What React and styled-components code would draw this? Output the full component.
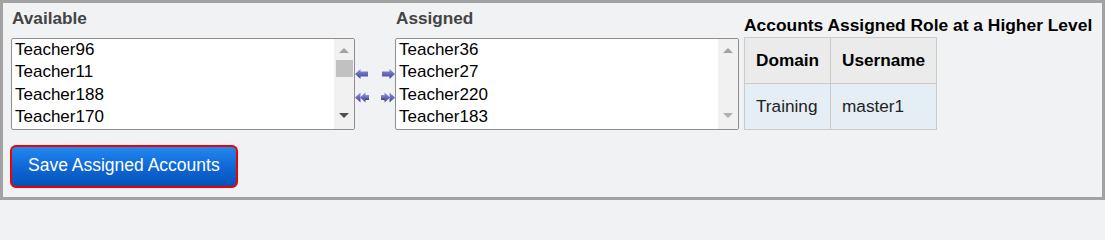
import React from "react";
import styled, { createGlobalStyle } from "styled-components";

const GlobalStyle = createGlobalStyle`
  html, body { margin: 0; padding: 0; background: #f1f2f4; }
  body { font-family: "Liberation Sans", Arial, sans-serif; }
  * { box-sizing: border-box; }
`;

const Panel = styled.div`
  width: 1105px;
  height: 200px;
  border: 3px solid #a2a2a2;
  background: #f1f2f4;
  padding: 5px 8px 0 8px;
  display: flex;
  flex-direction: column;
  align-items: flex-start;
`;

const TopRow = styled.div`
  display: flex;
  align-items: flex-start;
`;

const ListColumn = styled.div`
  display: flex;
  flex-direction: column;
  width: 344px;
`;

const Label = styled.div`
  font-size: 17.2px;
  font-weight: bold;
  line-height: 20px;
  color: #444;
  margin-bottom: 10px;
  padding-left: 1px;
`;

const ListBox = styled.div`
  height: 92px;
  border: 1px solid #8e8e8e;
  border-radius: 2px;
  background: #fff;
  display: flex;
  overflow: hidden;
`;

const Items = styled.div`
  flex: 1;
  padding: 0 0 0 3px;
  overflow: hidden;
`;

const Item = styled.div`
  font-size: 17px;
  line-height: 22.3px;
  color: #000;
  white-space: nowrap;
`;

const Scrollbar = styled.div`
  width: 20px;
  background: #f1f1f1;
  display: flex;
  flex-direction: column;
  align-items: center;
  padding: 9px 0 11px;
`;

const UpArrow = styled.div`
  width: 0;
  height: 0;
  border-left: 5px solid transparent;
  border-right: 5px solid transparent;
  border-bottom: 5px solid ${(p) => (p.$active ? "#505050" : "#a3a3a3")};
`;

const DownArrow = styled.div`
  margin-top: auto;
  width: 0;
  height: 0;
  border-left: 5px solid transparent;
  border-right: 5px solid transparent;
  border-top: 5px solid ${(p) => (p.$active ? "#505050" : "#b0b0b0")};
`;

const Thumb = styled.div`
  margin-top: 7px;
  width: 17px;
  height: 17px;
  background: #c1c1c1;
`;

const ArrowPad = styled.div`
  width: 40px;
  height: 92px;
  margin-top: 30px;
  padding-top: 30px;
  display: grid;
  grid-template-columns: 14px 14px;
  justify-content: space-between;
  align-content: start;
  row-gap: 13px;
`;

const ArrowButton = styled.span`
  display: flex;
  align-items: center;
  justify-content: ${(p) => (p.$right ? "flex-end" : "flex-start")};
  height: 11px;
  cursor: pointer;
`;

const HigherSection = styled.div`
  margin-left: 5px;
  padding-top: 7px;
  display: flex;
  flex-direction: column;
  align-items: flex-start;
`;

const Title = styled.div`
  font-size: 17.4px;
  font-weight: bold;
  line-height: 20px;
  color: #000;
  white-space: nowrap;
  margin-bottom: 2px;
`;

const Table = styled.table`
  border-collapse: collapse;
  border: 1px solid #cbcbcb;
  font-size: 17.2px;
`;

const Th = styled.th`
  background: #ebebeb;
  border: 1px solid #cbcbcb;
  height: 46px;
  padding: 0 11px;
  text-align: left;
  font-weight: bold;
  color: #000;
`;

const Td = styled.td`
  background: #e5eef5;
  border: 1px solid #cbcbcb;
  height: 46px;
  padding: 0 11px;
  color: #222;
`;

const SaveButton = styled.button`
  margin-top: 15px;
  margin-left: -1px;
  height: 43px;
  padding: 0 16px 3px;
  border: 2px solid #f00000;
  border-radius: 6px;
  background: linear-gradient(to bottom, #2488f0 0%, #0f68d6 50%, #0652ba 100%);
  color: #fff;
  font-family: "Liberation Sans", Arial, sans-serif;
  font-size: 17.5px;
  cursor: pointer;
`;

const SingleArrow = ({ dir }) => (
  <svg width="13" height="10" viewBox="0 0 13 10">
    <defs>
      <linearGradient id={`sg-${dir}`} x1="0" y1="0" x2="0" y2="1">
        <stop offset="0" stopColor="#8f93d8" />
        <stop offset="1" stopColor="#3d4298" />
      </linearGradient>
    </defs>
    <g transform={dir === "right" ? "translate(13,0) scale(-1,1)" : undefined}>
      <polygon
        points="0,5 5.5,0 5.5,2.5 13,2.5 13,7.5 5.5,7.5 5.5,10"
        fill={`url(#sg-${dir})`}
      />
    </g>
  </svg>
);

const DoubleArrow = ({ dir }) => (
  <svg width="14" height="11" viewBox="0 0 14 11">
    <defs>
      <linearGradient id={`dg-${dir}`} x1="0" y1="0" x2="0" y2="1">
        <stop offset="0" stopColor="#8f93d8" />
        <stop offset="1" stopColor="#3d4298" />
      </linearGradient>
    </defs>
    <g
      transform={dir === "right" ? "translate(14,0) scale(-1,1)" : undefined}
      fill={`url(#dg-${dir})`}
    >
      <polygon points="0,5.5 5.5,0.5 5.5,10.5" />
      <polygon points="5,5.5 10.5,0.5 10.5,10.5" />
      <rect x="10" y="3" width="4" height="5" />
    </g>
  </svg>
);

const available = ["Teacher96", "Teacher11", "Teacher188", "Teacher170"];
const assigned = ["Teacher36", "Teacher27", "Teacher220", "Teacher183"];

const AccountList = ({ label, items, scrollable }) => (
  <ListColumn>
    <Label>{label}</Label>
    <ListBox>
      <Items>
        {items.map((t) => (
          <Item key={t}>{t}</Item>
        ))}
      </Items>
      <Scrollbar>
        <UpArrow />
        {scrollable && <Thumb />}
        <DownArrow $active={scrollable} />
      </Scrollbar>
    </ListBox>
  </ListColumn>
);

export default function App() {
  return (
    <>
      <GlobalStyle />
      <Panel>
        <TopRow>
          <AccountList label="Available" items={available} scrollable />
          <ArrowPad>
            <ArrowButton title="Remove">
              <SingleArrow dir="left" />
            </ArrowButton>
            <ArrowButton $right title="Add">
              <SingleArrow dir="right" />
            </ArrowButton>
            <ArrowButton title="Remove all">
              <DoubleArrow dir="left" />
            </ArrowButton>
            <ArrowButton $right title="Add all">
              <DoubleArrow dir="right" />
            </ArrowButton>
          </ArrowPad>
          <AccountList label="Assigned" items={assigned} />
          <HigherSection>
            <Title>Accounts Assigned Role at a Higher Level</Title>
            <Table>
              <thead>
                <tr>
                  <Th>Domain</Th>
                  <Th>Username</Th>
                </tr>
              </thead>
              <tbody>
                <tr>
                  <Td>Training</Td>
                  <Td>master1</Td>
                </tr>
              </tbody>
            </Table>
          </HigherSection>
        </TopRow>
        <SaveButton>Save Assigned Accounts</SaveButton>
      </Panel>
    </>
  );
}
